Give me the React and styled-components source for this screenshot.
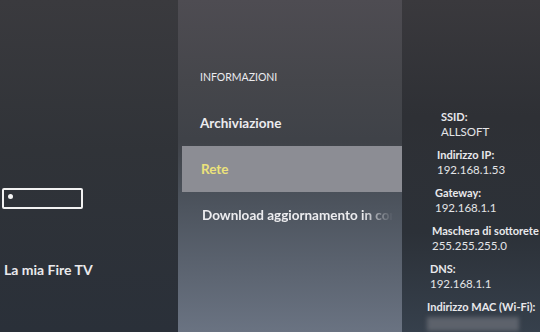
import styled, { createGlobalStyle } from "styled-components";

const Global = createGlobalStyle`
  html, body { margin: 0; padding: 0; background: #2e3137; }
  body { font-family: Lato, "Open Sans", sans-serif; }
`

const Screen = styled.div`
  width: 540px;
  height: 332px;
  display: flex;
  overflow: hidden;
  color: #e9e9ec;
`

const Side = styled.div`
  width: 178px;
  flex-shrink: 0;
  background: linear-gradient(180deg, #3a3a3e 0%, #303338 45%, #2a3039 100%);
  display: flex;
  flex-direction: column;
  padding-top: 188px;
  box-sizing: border-box;
`

const SearchBox = styled.div`
  width: 73px;
  height: 17px;
  margin-left: 2px;
  border: 2px solid #f2f2f2;
  border-radius: 2px;
  display: flex;
  align-items: center;
  padding-left: 4px;
`

const Dot = styled.span`
  width: 5px;
  height: 5px;
  border-radius: 50%;
  background: #f4f4f4;
  margin-top: -4px;
`

const SideTitle = styled.div`
  margin-top: 52px;
  margin-left: 4px;
  font-size: 14px;
  font-weight: 700;
  line-height: 18px;
`

const Menu = styled.div`
  width: 224px;
  flex-shrink: 0;
  padding-top: 54px;
  box-sizing: border-box;
  background: linear-gradient(180deg, #4e4c52 0%, #45464b 25%, #3f4248 42%, #4d545e 62%, #6a7382 100%);
  display: flex;
  flex-direction: column;
`

const Row = styled.div`
  height: 46px;
  display: flex;
  align-items: center;
  padding-left: ${p => p.$indent}px;
  margin-left: ${p => (p.$selected ? 4 : 0)}px;
  background: ${p => (p.$selected ? "#8c8d94" : "transparent")};
  color: ${p => (p.$selected ? "#ece27a" : "#ececef")};
  font-size: ${p => (p.$heading ? 10.5 : 13.5)}px;
  font-weight: ${p => (p.$heading ? 400 : 700)};
  white-space: nowrap;
  overflow: hidden;
  padding-right: 16px;
  mask-image: ${p => (p.$fade ? "linear-gradient(90deg, #000 82%, transparent 96%)" : "none")};
`

const Details = styled.div`
  flex: 1;
  background: linear-gradient(180deg, #3a393d 0%, #2e3035 35%, #2c3138 70%, #36404c 100%);
  padding-top: 109px;
  display: flex;
  flex-direction: column;
  gap: 7px;
  white-space: nowrap;
  overflow: hidden;
`

const Group = styled.div`
  padding-left: ${p => 25 + p.$shift}px;
  display: flex;
  flex-direction: column;
`

const Label = styled.div`
  font-size: 11px;
  font-weight: 700;
  line-height: 15px;
`

const Value = styled.div`
  font-size: 11.5px;
  line-height: 16px;
  color: #e4e5e8;
`

const Hidden = styled.div`
  width: 92px;
  height: 14px;
  margin-top: 3px;
  background: #5d626b;
  filter: blur(2px);
`

const info = [
  { label: "SSID:", value: "ALLSOFT", shift: 14 },
  { label: "Indirizzo IP:", value: "192.168.1.53", shift: 10 },
  { label: "Gateway:", value: "192.168.1.1", shift: 8 },
  { label: "Maschera di sottorete", value: "255.255.255.0", shift: 5 },
  { label: "DNS:", value: "192.168.1.1", shift: 3 },
]

export default function App() {
  return (
    <>
      <Global />
      <Screen>
        <Side>
          <SearchBox><Dot /></SearchBox>
          <SideTitle>La mia Fire TV</SideTitle>
        </Side>
        <Menu>
          <Row $heading $indent={22}>INFORMAZIONI</Row>
          <Row $indent={22}>Archiviazione</Row>
          <Row $selected $indent={19}>Rete</Row>
          <Row $fade $indent={24}>Download aggiornamento in corso</Row>
        </Menu>
        <Details>
          {info.map(i => (
            <Group key={i.label} $shift={i.shift}>
              <Label>{i.label}</Label>
              <Value>{i.value}</Value>
            </Group>
          ))}
          <Group $shift={0}>
            <Label>Indirizzo MAC (Wi-Fi):</Label>
            <Hidden />
          </Group>
        </Details>
      </Screen>
    </>
  )
}
